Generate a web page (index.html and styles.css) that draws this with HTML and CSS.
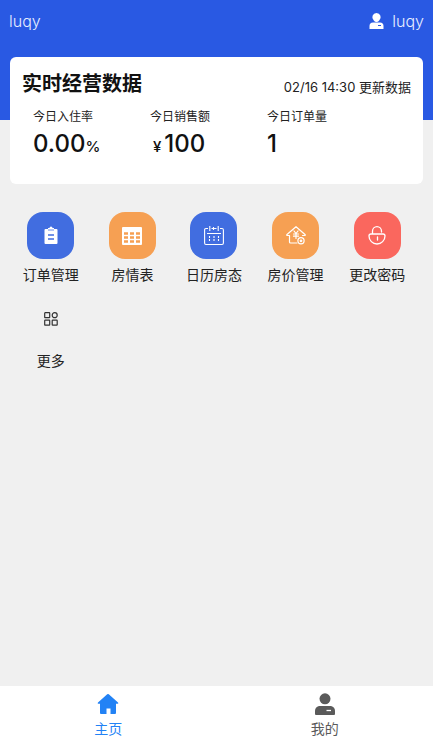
FILE: index.html
```
<!DOCTYPE html>
<html lang="zh-CN">
<head>
<meta charset="utf-8">
<meta name="viewport" content="width=device-width, initial-scale=1">
<title>主页</title>
<link rel="stylesheet" href="styles.css">
</head>
<body>
<header class="topbar">
  <span>luqy</span>
  <a class="account" href="#">
    <svg width="15" height="17" viewBox="0 0 15 17" fill="currentColor" aria-hidden="true"><path d="M7.500 0a4.200 4.200 0 0 1 2.700 7.400q-1.100 1.500-2.700 1.500t-2.700-1.500A4.200 4.200 0 0 1 7.500 0zM4 9.500h7q3.500 0 3.500 3.500v3H.5v-3Q.5 9.500 4 9.500z"/><path d="M9 12.500h3" stroke="#2959e3" stroke-width="1"/></svg>
    <span>luqy</span>
  </a>
</header>
<main>
  <section class="card">
    <div class="card-head">
      <h1>实时经营数据</h1>
      <time>02/16 14:30 更新数据</time>
    </div>
    <dl class="stats">
      <div><dt>今日入住率</dt><dd>0.00<small>%</small></dd></div>
      <div><dt>今日销售额</dt><dd><small class="currency">¥</small>100</dd></div>
      <div><dt>今日订单量</dt><dd>1</dd></div>
    </dl>
  </section>
  <nav class="menu" aria-label="功能">
    <a href="#"><span class="tile blue"><svg width="20" height="20" viewBox="0 0 20 20" aria-hidden="true"><path fill="#fff" d="M4.500 3h2.500V2h1.500a1.500 1.500 0 0 1 3 0H13v1h2.500q1 0 1 1v13q0 1-1 1h-11q-1 0-1-1V4q0-1 1-1z"/><path d="M7 4h6" stroke="#416de0" stroke-width=".8"/><path d="M7 9h6M7 13h6" stroke="#416de0" stroke-width="1.300"/></svg></span>订单管理</a>
    <a href="#"><span class="tile orange"><svg width="20" height="20" viewBox="0 0 20 20" aria-hidden="true"><rect y="1" width="20" height="18" rx="1" fill="#fff"/><path d="M2 7.500h4M8 7.500h4M14 7.500h4M2 11.500h4M8 11.500h4M14 11.500h4M2 15.500h4M8 15.500h4M14 15.500h4" stroke="#f6a053" stroke-width="2.300"/></svg></span>房情表</a>
    <a href="#"><span class="tile blue"><svg width="20" height="20" viewBox="0 0 20 20" fill="none" stroke="#fff" stroke-width="1.100" aria-hidden="true"><path d="M4 2.500H2q-1.400 0-1.400 1.400v13.200q0 1.400 1.400 1.400h16q1.400 0 1.400-1.400V3.900q0-1.400-1.400-1.400h-2M7.500 2.500h5M5.800 0v5M14.200 0v5M9.500 1v3M3 7.500h14"/><path d="M5.500 10v6M10 10v6M14.500 10v6" stroke-dasharray="2 1"/></svg></span>日历房态</a>
    <a href="#"><span class="tile orange"><svg width="20" height="20" viewBox="0 0 20 20" fill="none" stroke="#fff" stroke-width="1.200" stroke-linecap="round" stroke-linejoin="round" aria-hidden="true"><path d="M11 17H4.500q-1 0-1-1V9.500H1q-.6-.5 0-1L10 .7l9 7.800q.6.500 0 1h-2.500M8 5l2 2.500L12 5M10 7.500v5M7.500 8h5M7.500 10.200h5"/><circle cx="15" cy="14.800" r="3.100"/><circle cx="15" cy="14.800" r=".8"/></svg></span>房价管理</a>
    <a href="#"><span class="tile red"><svg width="20" height="20" viewBox="0 0 20 20" fill="none" stroke="#fff" stroke-width="1.300" stroke-linecap="round" aria-hidden="true"><path d="M5.500 8V5.200a4.500 4.500 0 0 1 9 0V6M4 8h12q2 0 2 2a8 8 0 0 1-16 0q0-2 2-2zM10.500 11v3"/></svg></span>更改密码</a>
    <a href="#"><span class="tile plain"><svg width="14" height="14" viewBox="0 0 14 14" fill="none" stroke="#333" stroke-width="1.200" aria-hidden="true"><rect x=".7" y=".7" width="5" height="5" rx=".5"/><circle cx="10.700" cy="3.200" r="2.500"/><rect x=".7" y="8.200" width="5" height="5" rx=".5"/><rect x="8.200" y="8.200" width="5" height="5" rx=".5"/></svg></span>更多</a>
  </nav>
</main>
<nav class="tabs" aria-label="底部导航">
  <a class="active" href="#"><svg width="22" height="22" viewBox="0 0 22 22" fill="currentColor" aria-hidden="true"><path d="M10.200 1.300q.8-.7 1.600 0L21 9.500q1 1-.3 1.300H19V20q0 1-1 1h-4.500v-5.500h-4V21H4q-1 0-1-1v-9.200H1.300Q0 10.500 1 9.500z"/></svg>主页</a>
  <a href="#"><svg width="22" height="22" viewBox="0 0 22 22" fill="currentColor" aria-hidden="true"><circle cx="11" cy="5.800" r="5.500"/><path d="M5 13h12q4 1 4 5v3q0 1-1 1H2q-1 0-1-1v-3q0-4 4-5z"/><path d="M12.500 17.500H17" stroke="#fff" stroke-width="1.300"/></svg>我的</a>
</nav>
</body>
</html>
```
FILE: styles.css
```
* {
  box-sizing: border-box;
}

body {
  display: flex;
  flex-direction: column;
  min-height: 100vh;
  margin: 0;
  background: #f0f0f0;
  color: #222;
  font-family: "Noto Sans CJK SC", "Noto Sans", sans-serif;
  font-size: 14px;
  line-height: 20px;
}

a {
  color: inherit;
  text-decoration: none;
}

svg {
  display: block;
}

.topbar {
  display: flex;
  justify-content: space-between;
  height: 120px;
  padding: 9px 9px 0;
  background: #2959e3;
  color: #e8eeff;
  font-family: Inter, "Noto Sans CJK SC", sans-serif;
  font-size: 16px;
  font-weight: 300;
  line-height: 24px;
}

.account {
  display: flex;
  gap: 8px;
  align-items: center;
  height: 24px;
}

.account svg {
  color: #fff;
}

main {
  flex: 1;
  margin-top: -63px;
}

.card {
  min-height: 127px;
  margin: 0 10px;
  padding: 12px;
  border-radius: 6px;
  background: #fff;
}

.card-head {
  display: flex;
  justify-content: space-between;
  align-items: flex-end;
}

h1 {
  margin: 0;
  color: #111;
  font-size: 20px;
  font-weight: 700;
  line-height: 28px;
}

time {
  font-family: Inter, "Noto Sans CJK SC", sans-serif;
  font-size: 13px;
}

.stats {
  display: grid;
  grid-template-columns: repeat(3, 1fr);
  margin: 9px 27px 0 11px;
}

dt {
  font-size: 12px;
  line-height: 20px;
}

dd {
  margin: 0;
  color: #111;
  font-family: Inter, "Noto Sans CJK SC", sans-serif;
  font-size: 24px;
  font-weight: 500;
  line-height: 36px;
}

small {
  font-size: 15px;
}

.currency {
  margin: 0 3px;
}

.menu {
  display: grid;
  grid-template-columns: repeat(5, 1fr);
  row-gap: 14px;
  padding: 28px 15px 0 10px;
}

.menu a {
  display: flex;
  flex-direction: column;
  align-items: center;
  gap: 5px;
}

.tile {
  display: grid;
  place-items: center;
  width: 47px;
  height: 47px;
  border-radius: 16px;
}

.plain {
  padding-bottom: 6px;
}

.blue {
  background: #416de0;
}

.orange {
  background: #f6a053;
}

.red {
  background: #fa675e;
}

.tabs {
  display: grid;
  grid-template-columns: 1fr 1fr;
  min-height: 56px;
  padding-top: 7px;
  background: #fff;
  color: #5a5a5a;
}

.tabs a {
  display: flex;
  flex-direction: column;
  align-items: center;
  gap: 3px;
}

.tabs .active {
  color: #2282f5;
}
```
